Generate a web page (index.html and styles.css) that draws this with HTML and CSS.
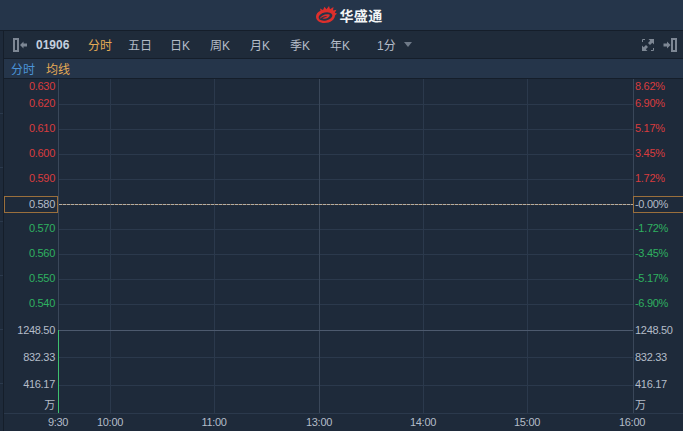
FILE: index.html
```html
<!DOCTYPE html>
<html>
<head>
	<meta charset="utf-8">
	<link rel="stylesheet" href="styles.css">
</head>
<body>
	<div class="top">
		<svg class="logo" width="21" height="17" viewBox="0 0 21 17">
			<path d="M0 10.500 C0 8 2 5.800 4.500 4.800 L4 2.500 L7 4 L8.500 0.800 L10.500 3.300 L13 0 L14 3.300 L17.500 1 L17 4.500 L20.500 3.800 L18.800 6.800 L21 7.500 L19 9.500 C18.800 13.500 14.500 17 8.500 17 C3.500 17 0 14.500 0 10.500 Z" fill="#dd2f2c"/>
			<ellipse cx="9.500" cy="10.500" rx="7" ry="4" transform="rotate(-12 9.500 10.500)" fill="#25354a"/>
			<path d="M3.500 13 C5 9 10 7.500 13.500 8.500 C14.500 10 12 12.500 9 12.800 C7.500 13 6.500 12.500 6.500 12 C8 11.800 10 11 11.200 10 C8.500 9.800 6 11 3.500 13 Z" fill="#dd2f2c"/>
		</svg>
		<span class="brand">华盛通</span>
	</div>
	<div class="tools">
		<svg class="ico_left" width="15" height="14" viewBox="0 0 15 14">
			<rect x="1" y="1" width="4" height="12" fill="none" stroke="#7d8794" stroke-width="2"/>
			<path d="M7 7 L10.500 3.500 V5.500 H14 V8.500 H10.500 V10.500 Z" fill="#7d8794"/>
		</svg>
		<span class="code">01906</span>
		<div class="tabs">
			<span class="tab active">分时</span>
			<span class="tab">五日</span>
			<span class="tab">日K</span>
			<span class="tab">周K</span>
			<span class="tab">月K</span>
			<span class="tab">季K</span>
			<span class="tab">年K</span>
		</div>
		<span class="period">1分</span>
		<span class="caret"></span>
		<svg class="ico_full" width="12" height="12" viewBox="0 0 12 12">
			<path d="M12 0 V5.500 L10.300 3.800 L8 6 L6 4 L8.200 1.700 L6.500 0 Z M0 12 V6.500 L1.700 8.200 L4 6 L6 8 L3.800 10.300 L5.500 12 Z" fill="#7d8794"/>
			<path d="M0.500 3 V0.500 H3 M11.500 9 V11.500 H9" fill="none" stroke="#7d8794"/>
		</svg>
		<svg class="ico_right" width="15" height="14" viewBox="0 0 15 14">
			<path d="M7.500 7 L4 3.500 V5.500 H0.500 V8.500 H4 V10.500 Z" fill="#7d8794"/>
			<rect x="9" y="1" width="4" height="12" fill="none" stroke="#7d8794" stroke-width="2"/>
		</svg>
	</div>
	<div class="legend">
		<span class="blue">分时</span>
		<span class="gold">均线</span>
	</div>
	<svg class="chart" width="683" height="352" viewBox="0 79 683 352">
		<g class="grid">
			<path d="M58 104.500 H633 M58 129.500 H633 M58 154.500 H633 M58 179.500 H633 M58 229.500 H633 M58 254.500 H633 M58 279.500 H633 M58 304.500 H633"/>
			<path d="M58 357.500 H633 M58 385.500 H633 M4 413.500 H683"/>
			<path d="M110.500 79 V413 M214.500 79 V413 M423.500 79 V413 M527.500 79 V413"/>
			<path d="M0 113.500 H3 M0 167.500 H3 M0 221.500 H3 M0 275.500 H3 M0 329.500 H3 M0 383.500 H3"/>
		</g>
		<path class="side" d="M3.500 79 V431"/>
		<path class="frame" d="M58.500 79 V413 M633.500 79 V413 M319.500 79 V413"/>
		<path class="vol_top" d="M59 330.500 H633"/>
		<path class="vol_bar" d="M58.500 330 V413"/>
		<path class="mid_a" d="M59 204.500 H633"/>
		<path class="mid_b" d="M59 204.500 H633"/>
		<rect class="box" x="4.500" y="196.500" width="53" height="16"/>
		<rect class="box" x="633.500" y="196.500" width="55" height="16"/>

		<g class="lab end red">
			<text x="55" y="90">0.630</text>
			<text x="55" y="107">0.620</text>
			<text x="55" y="132">0.610</text>
			<text x="55" y="157">0.600</text>
			<text x="55" y="182">0.590</text>
		</g>
		<text class="lab end gray" x="55" y="208">0.580</text>
		<g class="lab end green">
			<text x="55" y="232">0.570</text>
			<text x="55" y="257">0.560</text>
			<text x="55" y="282">0.550</text>
			<text x="55" y="307">0.540</text>
		</g>
		<g class="lab end gray">
			<text x="55" y="334">1248.50</text>
			<text x="55" y="361">832.33</text>
			<text x="55" y="388">416.17</text>
			<text x="55" y="409">万</text>
		</g>

		<g class="lab red">
			<text x="635" y="90">8.62%</text>
			<text x="635" y="107">6.90%</text>
			<text x="635" y="132">5.17%</text>
			<text x="635" y="157">3.45%</text>
			<text x="635" y="182">1.72%</text>
		</g>
		<text class="lab gray" x="635" y="208">-0.00%</text>
		<g class="lab green">
			<text x="635" y="232">-1.72%</text>
			<text x="635" y="257">-3.45%</text>
			<text x="635" y="282">-5.17%</text>
			<text x="635" y="307">-6.90%</text>
		</g>
		<g class="lab gray">
			<text x="635" y="334">1248.50</text>
			<text x="635" y="361">832.33</text>
			<text x="635" y="388">416.17</text>
			<text x="635" y="409">万</text>
		</g>

		<g class="lab mid gray">
			<text x="58" y="426">9:30</text>
			<text x="110" y="426">10:00</text>
			<text x="214" y="426">11:00</text>
			<text x="319" y="426">13:00</text>
			<text x="423" y="426">14:00</text>
			<text x="527" y="426">15:00</text>
			<text x="632" y="426">16:00</text>
		</g>
	</svg>
</body>
</html>
```

FILE: styles.css
```css
body {
	margin: 0;
	width: 683px;
	height: 431px;
	overflow: hidden;
	background-color: #1e2a3a;
	font-family: "Liberation Sans", "Noto Sans CJK SC", sans-serif;
	font-size: 12px;
	color: #b4bcc8;
}
.top {
	height: 30px;
	background-color: #25354a;
	border-bottom: 1px solid #151e2a;
	display: flex;
	align-items: center;
	justify-content: center;
	gap: 3px;
	padding-left: 15px;
}
.logo {
	margin-bottom: 1px;
}
.brand {
	color: #f2f4f6;
	font-size: 14px;
	font-weight: bold;
	letter-spacing: 0.3px;
}
.tools {
	height: 27px;
	margin-left: 3px;
	border-left: 1px solid #151e2a;
	background-color: #1f2b3a;
	border-bottom: 1px solid #151e2a;
	display: flex;
	align-items: center;
}
.ico_left {
	margin-left: 9px;
}
.code {
	margin-left: 8px;
	width: 44px;
	color: #c3cfdf;
	font-weight: bold;
}
.tabs {
	display: flex;
}
.tab {
	width: 40px;
	text-align: center;
}
.tab.active {
	color: #e5ab55;
}
.period {
	margin-left: 17px;
	width: 27px;
}
.caret {
	width: 0;
	height: 0;
	border-left: 4px solid transparent;
	border-right: 4px solid transparent;
	border-top: 5px solid #6f7a88;
}
.ico_full {
	margin-left: 230px;
}
.ico_right {
	margin-left: 9px;
}
.legend {
	height: 19px;
	margin-left: 3px;
	border-left: 1px solid #151e2a;
	background-color: #25354a;
	border-bottom: 1px solid #151e2a;
	display: flex;
	align-items: center;
	gap: 11px;
	padding-left: 7px;
}
.blue {
	color: #4b94d8;
}
.gold {
	color: #e5ab55;
}
.chart {
	display: block;
}
.grid path {
	fill: none;
	stroke: #2b394c;
}
.side {
	stroke: #151e2a;
}
.frame {
	fill: none;
	stroke: #3a4759;
}
.vol_top {
	stroke: #4d5a6e;
}
.vol_bar {
	stroke: #3fc06f;
}
.mid_a {
	stroke: #7d5f40;
}
.mid_b {
	stroke: #b3aea6;
	stroke-dasharray: 3 1;
}
.box {
	fill: #1e2a3a;
	stroke: #9a6f3c;
}
.lab {
	font-family: "Liberation Sans", "Noto Sans CJK SC", sans-serif;
	font-size: 11px;
	letter-spacing: -0.3px;
}
.end {
	text-anchor: end;
}
.mid {
	text-anchor: middle;
}
.red {
	fill: #d93c3e;
}
.green {
	fill: #2fb060;
}
.gray {
	fill: #b4bcc8;
}
```
